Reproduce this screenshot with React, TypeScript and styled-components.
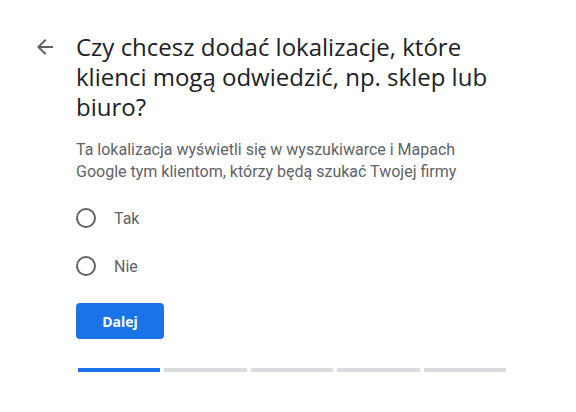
import React, { useState } from "react";
import styled, { createGlobalStyle } from "styled-components";

const GlobalStyle = createGlobalStyle`
  html, body {
    margin: 0;
    padding: 0;
    background: #ffffff;
  }
  body {
    font-family: Roboto, "Liberation Sans", Arial, sans-serif;
  }
`;

const Page = styled.div`
  display: flex;
  align-items: flex-start;
  padding: 32px 0 0 32px;
  gap: 18px;
`;

const BackButton = styled.button`
  width: 26px;
  height: 30px;
  display: flex;
  align-items: center;
  justify-content: center;
  padding: 0;
  border: none;
  background: none;
  cursor: pointer;
  color: #5f6368;
`;

const Content = styled.div`
  width: 432px;
  display: flex;
  flex-direction: column;
`;

const Title = styled.h1`
  margin: 0;
  font-family: "Open Sans", "Noto Sans", sans-serif;
  font-weight: 400;
  font-size: 24px;
  line-height: 30px;
  color: #202124;
`;

const Description = styled.p`
  margin: 17px 0 0;
  font-size: 16px;
  line-height: 22px;
  color: #5f6368;
`;

const Options = styled.div`
  display: flex;
  flex-direction: column;
  gap: 28px;
  margin-top: 25px;
`;

const Option = styled.label`
  display: flex;
  align-items: center;
  gap: 18px;
  height: 20px;
  cursor: pointer;
  font-size: 16px;
  color: #5f6368;
`;

const RadioCircle = styled.span<{ $checked: boolean }>`
  width: 16px;
  height: 16px;
  border-radius: 50%;
  border: 2px solid ${(p) => (p.$checked ? "#1a73e8" : "#5f6368")};
  display: flex;
  align-items: center;
  justify-content: center;
  &::after {
    content: "";
    width: 8px;
    height: 8px;
    border-radius: 50%;
    background: ${(p) => (p.$checked ? "#1a73e8" : "transparent")};
  }
`;

const NextButton = styled.button`
  margin-top: 27px;
  width: 88px;
  height: 36px;
  padding: 0;
  border: none;
  border-radius: 4px;
  background: #1a73e8;
  color: #ffffff;
  font-family: "Open Sans", sans-serif;
  font-weight: 700;
  font-size: 14px;
  cursor: pointer;
  align-self: flex-start;
`;

const Progress = styled.div`
  display: grid;
  grid-template-columns: repeat(5, 1fr);
  gap: 4px;
  width: 428px;
  margin: 29px 0 0 2px;
`;

const Segment = styled.div<{ $active: boolean }>`
  height: 4px;
  background: ${(p) => (p.$active ? "#1a73e8" : "#dadce0")};
`;

const App: React.FC = () => {
  const [choice, setChoice] = useState<string | null>(null);
  const steps = [true, false, false, false, false];

  return (
    <>
      <GlobalStyle />
      <Page>
        <BackButton aria-label="Wstecz">
          <svg width="16" height="16" viewBox="0 0 16 16">
            <path d="M16 7H3.83l5.59-5.59L8 0 0 8l8 8 1.41-1.41L3.83 9H16z" fill="currentColor" />
          </svg>
        </BackButton>
        <Content>
          <Title>Czy chcesz dodać lokalizacje, które klienci mogą odwiedzić, np. sklep lub biuro?</Title>
          <Description>
            Ta lokalizacja wyświetli się w wyszukiwarce i Mapach Google tym klientom, którzy będą szukać Twojej firmy
          </Description>
          <Options>
            {["Tak", "Nie"].map((label) => (
              <Option key={label} onClick={() => setChoice(label)}>
                <RadioCircle $checked={choice === label} />
                {label}
              </Option>
            ))}
          </Options>
          <NextButton>Dalej</NextButton>
          <Progress>
            {steps.map((active, i) => (
              <Segment key={i} $active={active} />
            ))}
          </Progress>
        </Content>
      </Page>
    </>
  );
};

export default App;
